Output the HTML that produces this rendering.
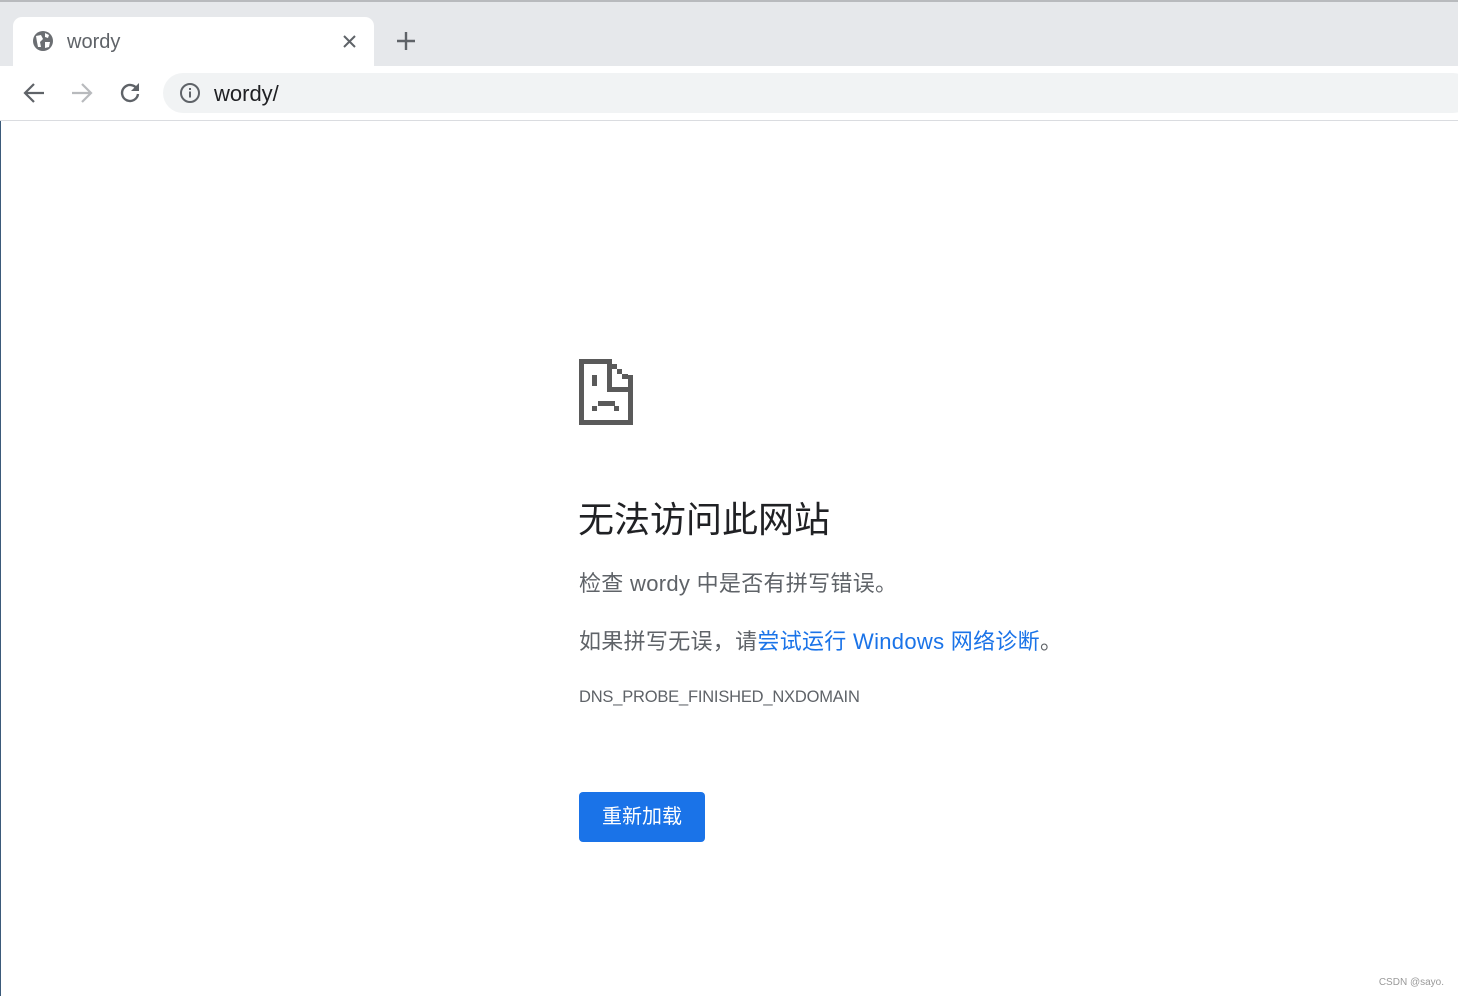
<!DOCTYPE html>
<html><head><meta charset="utf-8"><style>
*{margin:0;padding:0;box-sizing:border-box}
body{width:1458px;height:996px;overflow:hidden;background:#fff;font-family:"Liberation Sans","Noto Sans CJK SC",sans-serif;position:relative}
.strip{position:absolute;left:0;top:0;width:1458px;height:66px;background:#e6e8eb;border-top:2px solid #b8babd}
.tab{position:absolute;left:13px;top:15px;width:361px;height:51px;background:#fff;border-radius:9px 9px 0 0}
.tab .t{position:absolute;left:54px;top:14px;font-size:20px;color:#5f6368}
.tool{position:absolute;left:0;top:66px;width:1458px;height:55px;background:#fff;border-bottom:1px solid #dadce0}
.omni{position:absolute;left:163px;top:7px;width:1310px;height:40px;background:#f1f3f4;border-radius:20px}
.omni .u{position:absolute;left:51px;top:8px;font-size:22px;color:#202124}
.leftline{position:absolute;left:0;top:121px;width:1px;height:875px;background:#3b5a7a}
.c{position:absolute;left:579px}
h1{position:absolute;left:578px;top:491px;font-size:36px;font-weight:normal;color:#202124;white-space:nowrap}
.p{font-size:22px;color:#5f6368;white-space:nowrap;letter-spacing:0.3px}
a{color:#1a73e8;text-decoration:none}
.btn{position:absolute;left:579px;top:792px;width:126px;height:50px;background:#1a73e8;border-radius:4px;color:#fff;font-size:20px;text-align:center;line-height:50px}
.wm{position:absolute;right:14px;bottom:8px;font-size:10px;color:#999}
</style></head><body>
<div class="strip">
 <div class="tab">
  <svg style="position:absolute;left:19px;top:13px" width="22" height="22" viewBox="0 0 22 22"><circle cx="11" cy="11" r="10" fill="#6b6e72"/><path d="M4 6 L9 5 L11 9 L8 12 L9 17 L6 17 L5 12 Z M13 3 L17 5 L16 8 L13 7 Z M13 12 L18 12 L17 17 L13 18 Z" fill="#fff"/></svg>
  <div class="t">wordy</div>
  <svg style="position:absolute;left:330px;top:18px" width="13" height="13" viewBox="0 0 13 13"><path d="M1 1L12 12M12 1L1 12" stroke="#5f6368" stroke-width="2"/></svg>
 </div>
 <svg style="position:absolute;left:396px;top:29px" width="20" height="20" viewBox="0 0 20 20"><path d="M10 1V19M1 10H19" stroke="#5f6368" stroke-width="2.4"/></svg>
</div>
<div class="tool">
 <svg style="position:absolute;left:23px;top:16px" width="22" height="22" viewBox="0 0 22 22"><path d="M21 11H3M11 2L2 11L11 20" stroke="#5f6368" stroke-width="2.2" fill="none"/></svg>
 <svg style="position:absolute;left:71px;top:16px" width="22" height="22" viewBox="0 0 22 22"><path d="M1 11H19M11 2L20 11L11 20" stroke="#b8babd" stroke-width="2.2" fill="none"/></svg>
 <svg style="position:absolute;left:119px;top:15px" width="22" height="22" viewBox="0 0 22 22"><path d="M18 8A8 8 0 1 0 19 13" stroke="#5f6368" stroke-width="2.4" fill="none"/><path d="M20 2V10H12Z" fill="#5f6368"/></svg>
 <div class="omni">
  <svg style="position:absolute;left:16px;top:9px" width="22" height="22" viewBox="0 0 22 22"><circle cx="11" cy="11" r="9" stroke="#5f6368" stroke-width="2" fill="none"/><rect x="10" y="9.5" width="2" height="6" fill="#5f6368"/><rect x="10" y="6" width="2" height="2" fill="#5f6368"/></svg>
  <div class="u">wordy/</div>
 </div>
</div>
<div class="leftline"></div>
<svg style="position:absolute;left:579px;top:359px" width="55" height="67" viewBox="0 0 55 67">
 <g fill="#5a5a5a">
  <rect x="0" y="0" width="33" height="5"/>
  <rect x="0" y="0" width="5" height="66"/>
  <rect x="0" y="61" width="54" height="5"/>
  <rect x="49" y="16" width="5" height="50"/>
  <rect x="28" y="0" width="5" height="33"/>
  <rect x="28" y="28" width="26" height="5"/>
  <rect x="33" y="5" width="5" height="5"/>
  <rect x="38" y="10" width="5" height="5"/>
  <rect x="43" y="15" width="6" height="5"/>
  <rect x="13" y="16" width="5" height="11"/>
  <rect x="19" y="42" width="17" height="5"/>
  <rect x="13" y="47" width="5" height="5"/>
  <rect x="35" y="47" width="5" height="5"/>
 </g>
</svg>
<h1>无法访问此网站</h1>
<div class="c p" style="top:566px">检查 wordy 中是否有拼写错误。</div>
<div class="c p" style="top:624px">如果拼写无误，请<a>尝试运行 Windows 网络诊断</a>。</div>
<div class="c" style="top:688px;font-size:16.5px;color:#5f6368;letter-spacing:-0.2px">DNS_PROBE_FINISHED_NXDOMAIN</div>
<div class="btn">重新加载</div>
<div class="wm">CSDN @sayo.</div>
</body></html>
